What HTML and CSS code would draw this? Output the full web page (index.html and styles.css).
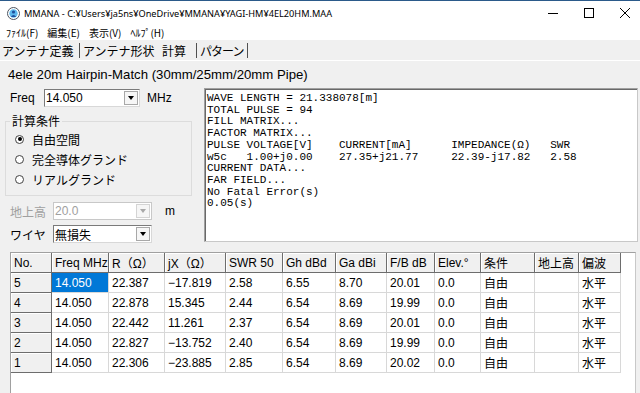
FILE: index.html
```html
<!DOCTYPE html>
<html lang="ja">
<head>
    <meta charset="UTF-8">
    <title>MMANA</title>
    <link rel="stylesheet" href="styles.css">
</head>
<body>
    <div class="titlebar">
        <svg class="app-icon" width="13" height="13" viewBox="0 0 13 13">
            <circle cx="6.5" cy="6.5" r="6" fill="#fff" stroke="#4d5560" stroke-width="1"/>
            <circle cx="6.5" cy="6.5" r="4.2" fill="#5cb8ee"/>
            <circle cx="6.5" cy="5" r="1.6" fill="#1d4f9c"/>
            <path d="M3.8 10 Q6.5 6.2 9.2 10 Z" fill="#1d4f9c"/>
        </svg>
        <span class="title">MMANA - C:¥Users¥ja5ns¥OneDrive¥MMANA¥YAGI-HM¥4EL20HM.MAA</span>
        <div class="controls">
            <svg width="10" height="10" viewBox="0 0 10 10"><path d="M0 5.5 H10" stroke="#000" stroke-width="1"/></svg>
            <svg width="10" height="10" viewBox="0 0 10 10"><rect x="0.5" y="0.5" width="9" height="9" fill="none" stroke="#000" stroke-width="1"/></svg>
            <svg width="10" height="10" viewBox="0 0 10 10"><path d="M0 0 L10 10 M10 0 L0 10" stroke="#000" stroke-width="1"/></svg>
        </div>
    </div>

    <div class="menubar">
        <span>ﾌｧｲﾙ(F)</span>
        <span>編集(E)</span>
        <span>表示(V)</span>
        <span>ﾍﾙﾌﾟ(H)</span>
    </div>

    <div class="tabs">
        <span class="tab tab-define">アンテナ定義</span>
        <span class="tab tab-shape">アンテナ形状</span>
        <span class="tab tab-calc active">計算</span>
        <span class="tab tab-pattern">パターン</span>
    </div>

    <div class="page">
        <div class="heading">4ele 20m Hairpin-Match (30mm/25mm/20mm Pipe)</div>

        <div class="calc">
            <div class="side">
                <div class="row freq-row">
                    <span class="label">Freq</span>
                    <div class="combo freq"><span class="value">14.050</span><span class="drop"></span></div>
                    <span class="unit">MHz</span>
                </div>

                <fieldset class="group">
                    <legend>計算条件</legend>
                    <div class="radio checked"><span class="mark"></span>自由空間</div>
                    <div class="radio"><span class="mark"></span>完全導体グランド</div>
                    <div class="radio"><span class="mark"></span>リアルグランド</div>
                </fieldset>

                <div class="row height-row disabled">
                    <span class="label">地上高</span>
                    <div class="combo"><span class="value">20.0</span><span class="drop"></span></div>
                    <span class="unit">m</span>
                </div>

                <div class="row wire-row">
                    <span class="label">ワイヤ</span>
                    <div class="combo"><span class="value">無損失</span><span class="drop"></span></div>
                </div>
            </div>

<pre class="log">WAVE LENGTH = 21.338078[m]
TOTAL PULSE = 94
FILL MATRIX...
FACTOR MATRIX...
PULSE VOLTAGE[V]    CURRENT[mA]      IMPEDANCE(Ω)   SWR
w5c   1.00+j0.00    27.35+j21.77     22.39-j17.82   2.58
CURRENT DATA...
FAR FIELD...
No Fatal Error(s)
0.05(s)</pre>
        </div>

        <div class="grid">
            <table>
                <thead>
                    <tr>
                        <th class="c-no">No.</th>
                        <th class="c-freq">Freq MHz</th>
                        <th class="c-r">R（Ω）</th>
                        <th class="c-jx">jX（Ω）</th>
                        <th class="c-swr">SWR 50</th>
                        <th class="c-gh">Gh dBd</th>
                        <th class="c-ga">Ga dBi</th>
                        <th class="c-fb">F/B dB</th>
                        <th class="c-elev">Elev.°</th>
                        <th class="c-cond">条件</th>
                        <th class="c-hgt">地上高</th>
                        <th class="c-pol">偏波</th>
                    </tr>
                </thead>
                <tbody>
                    <tr>
                        <td class="fixed">5</td><td class="sel">14.050</td><td>22.387</td><td>−17.819</td><td>2.58</td><td>6.55</td><td>8.70</td><td>20.01</td><td>0.0</td><td>自由</td><td></td><td>水平</td>
                    </tr>
                    <tr>
                        <td class="fixed">4</td><td>14.050</td><td>22.878</td><td>15.345</td><td>2.44</td><td>6.54</td><td>8.69</td><td>19.99</td><td>0.0</td><td>自由</td><td></td><td>水平</td>
                    </tr>
                    <tr>
                        <td class="fixed">3</td><td>14.050</td><td>22.442</td><td>11.261</td><td>2.37</td><td>6.54</td><td>8.69</td><td>20.01</td><td>0.0</td><td>自由</td><td></td><td>水平</td>
                    </tr>
                    <tr>
                        <td class="fixed">2</td><td>14.050</td><td>22.827</td><td>−13.752</td><td>2.40</td><td>6.54</td><td>8.69</td><td>19.99</td><td>0.0</td><td>自由</td><td></td><td>水平</td>
                    </tr>
                    <tr>
                        <td class="fixed">1</td><td>14.050</td><td>22.306</td><td>−23.885</td><td>2.85</td><td>6.54</td><td>8.69</td><td>20.02</td><td>0.0</td><td>自由</td><td></td><td>水平</td>
                    </tr>
                </tbody>
            </table>
        </div>
    </div>
</body>
</html>
```

FILE: styles.css
```css
* {
    box-sizing: border-box;
}

body {
    margin: 0;
    width: 640px;
    height: 393px;
    overflow: hidden;
    background: #f0f0f0;
    font-family: "Liberation Sans", "Noto Sans CJK JP", sans-serif;
    font-size: 12px;
    color: #000;
}

/* window caption */
.titlebar {
    height: 25px;
    border-top: 1px solid #2b5a8a;
    background: #fff;
    display: flex;
    align-items: center;
    padding-left: 7px;
}

.app-icon {
    display: block;
    margin-right: 4px;
}

.title {
    font-family: "Noto Sans", "Noto Sans CJK JP", sans-serif;
    font-size: 9.2px;
    color: #000;
}

.controls {
    margin-left: auto;
    margin-right: 10px;
    display: flex;
    gap: 26px;
}

.controls svg {
    display: block;
}

.menubar {
    height: 15px;
    background: #fff;
    display: flex;
    align-items: center;
    gap: 9px;
    padding-left: 6px;
    font-family: "Noto Sans CJK JP", sans-serif;
    font-size: 10px;
}

/* tabs */
.tabs {
    height: 20px;
    display: flex;
    font-family: "Noto Sans CJK JP", sans-serif;
    font-size: 12px;
}

.tab {
    margin: 3px 0 2px;
    height: 15px;
    line-height: 15px;
    white-space: nowrap;
}

.tab-define {
    width: 80px;
    padding-left: 2px;
    border-right: 1px solid #505050;
}

.tab-shape {
    width: 78px;
    padding-left: 3px;
}

.tab-calc {
    width: 39px;
    padding-left: 4px;
    border-right: 1px solid #505050;
}

.tab-pattern {
    width: 51px;
    padding-left: 3px;
    letter-spacing: -1px;
    border-right: 1px solid #505050;
}

/* tab page */
.page {
    border-top: 1px solid #fff;
}

.heading {
    margin: 5px 0 0 8px;
    font-size: 13.2px;
    line-height: 18px;
}

.calc {
    display: flex;
    margin-top: 4px;
    height: 155px;
}

.side {
    width: 204px;
}

.row {
    display: flex;
    align-items: center;
    height: 18px;
}

.freq-row {
    margin-top: 1px;
}

.label {
    padding-left: 10px;
    width: 53px;
}

.freq-row .label {
    width: 44px;
}

.unit {
    margin-left: 13px;
}

.freq-row .unit {
    margin-left: 7px;
}

.combo {
    width: 99px;
    height: 18px;
    display: flex;
    align-items: center;
    background: #fff;
    border: 1px solid;
    border-color: #7a7a7a #d8d8d8 #d8d8d8 #7a7a7a;
}

.combo.freq {
    width: 96px;
}

.combo .value {
    flex: 1;
    padding-left: 1px;
}

.drop {
    width: 14px;
    height: 14px;
    margin-right: 1px;
    border: 1px solid #a8a8a8;
    background: #f6f6f6;
    display: flex;
    align-items: center;
    justify-content: center;
}

.drop::after {
    content: "";
    border-left: 3.5px solid transparent;
    border-right: 3.5px solid transparent;
    border-top: 4px solid #000;
}

.disabled {
    color: #a0a0a0;
}

.disabled .unit {
    color: #000;
}

.disabled .combo {
    border-color: #c8c8c8;
}

.disabled .drop {
    border-color: #d4d4d4;
}

.disabled .drop::after {
    border-top-color: #a8a8a8;
}

.height-row {
    margin-top: 6px;
}

.wire-row {
    margin-top: 5px;
}

/* group box */
.group {
    margin: 7px 0 0 5px;
    width: 187px;
    border: 1px solid #dcdcdc;
    padding: 1px 0 6px 4px;
    font-family: "Noto Sans CJK JP", sans-serif;
}

.group legend {
    padding: 0 2px;
    font-size: 12px;
    line-height: 14px;
}

.radio {
    display: flex;
    align-items: center;
    height: 20px;
    padding-left: 5px;
}

.radio .mark {
    width: 9px;
    height: 9px;
    margin-right: 8px;
    border: 1px solid #444;
    border-radius: 50%;
    background: #fff;
    display: flex;
    align-items: center;
    justify-content: center;
}

.radio.checked .mark::after {
    content: "";
    width: 4px;
    height: 4px;
    border-radius: 50%;
    background: #000;
}

/* calculation log */
.log {
    flex: 1;
    height: 154px;
    margin: 0 2px 0 0;
    padding: 4px 0 0 2px;
    background: #fff;
    border: 1px solid;
    border-color: #a0a0a0 #c8c8c8 #c8c8c8 #a0a0a0;
    box-shadow: inset 1px 1px 0 #696969;
    font-family: "Liberation Mono", monospace;
    font-size: 11px;
    line-height: 11.7px;
    overflow: hidden;
}

/* result grid */
.grid {
    margin: 9px 4px 0 10px;
    height: 160px;
    background: #fff;
    border-top: 1px solid #a0a0a0;
    border-left: 1px solid #a0a0a0;
    border-right: 1px solid #c8c8c8;
}

.grid table {
    border-collapse: separate;
    border-spacing: 0;
    table-layout: fixed;
    width: 610px;
}

.grid th,
.grid td {
    height: 20px;
    padding: 0 0 0 3px;
    text-align: left;
    font-weight: normal;
    white-space: nowrap;
    overflow: hidden;
    border-right: 1px solid #d8d8d8;
    border-bottom: 1px solid #d8d8d8;
}

.grid th,
.grid td.fixed {
    background: #f0f0f0;
    border-right-color: #6d6d6d;
    border-bottom-color: #6d6d6d;
    box-shadow: inset 1px 1px 0 #fff;
}

.grid td.sel {
    background: #0078d7;
    color: #fff;
}

.c-no { width: 41px; }
.c-freq { width: 57px; }
.c-r { width: 56px; }
.c-jx { width: 61px; }
.c-swr { width: 57px; }
.c-gh { width: 53px; }
.c-ga { width: 51px; }
.c-fb { width: 48px; }
.c-elev { width: 46px; }
.c-cond { width: 54px; }
.c-hgt { width: 44px; }
.c-pol { width: 42px; }
```
